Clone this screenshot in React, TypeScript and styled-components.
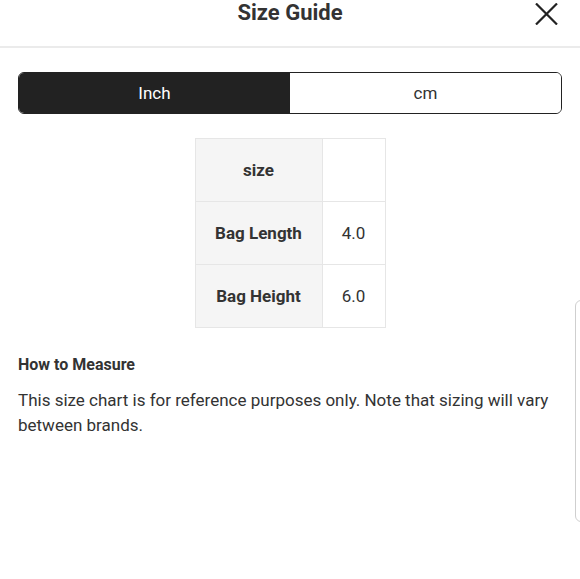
import React, { useState } from "react";
import styled, { createGlobalStyle } from "styled-components";

const Global = createGlobalStyle`
  html, body { margin: 0; padding: 0; background: #fff; }
  body { font-family: Roboto, "Liberation Sans", Arial, sans-serif; color: #333; }
  * { box-sizing: border-box; }
`;

const Page = styled.div`
  position: relative;
  width: 580px;
  height: 579px;
  overflow: hidden;
  background: #fff;
`;

const Header = styled.header`
  display: grid;
  grid-template-columns: 1fr auto 1fr;
  align-items: start;
  height: 48px;
  border-bottom: 2px solid #ebebeb;
`;

const Title = styled.h1`
  grid-column: 2;
  margin: 0;
  font-size: 22px;
  line-height: 26px;
  font-weight: 700;
  color: #333;
`;

const Close = styled.button`
  grid-column: 3;
  justify-self: end;
  margin: 3px 22px 0 0;
  padding: 0;
  width: 23px;
  height: 22px;
  border: none;
  background: none;
  display: flex;
  cursor: pointer;
`;

const Toggle = styled.div`
  display: flex;
  margin: 24px 18px 0;
  height: 42px;
  border: 1.5px solid #222;
  border-radius: 6px;
  overflow: hidden;
`;

const ToggleOption = styled.button<{ $active: boolean }>`
  flex: 1;
  border: none;
  margin: 0;
  padding: 0;
  font-family: inherit;
  font-size: 17px;
  color: ${(p) => (p.$active ? "#fff" : "#333")};
  background: ${(p) => (p.$active ? "#222" : "#fff")};
  cursor: pointer;
`;

const Table = styled.table`
  margin: 24px auto 0;
  border-collapse: collapse;
`;

const Cell = styled.td<{ $label?: boolean }>`
  border: 1px solid #e6e6e6;
  height: 63px;
  width: ${(p) => (p.$label ? "127px" : "63px")};
  padding: 0;
  text-align: center;
  font-size: 17px;
  color: #333;
  font-weight: ${(p) => (p.$label ? 700 : 400)};
  background: ${(p) => (p.$label ? "#f5f5f5" : "#fff")};
`;

const Section = styled.section`
  padding: 27px 18px 0;
`;

const SectionTitle = styled.h2`
  margin: 0;
  font-size: 16px;
  line-height: 20px;
  font-weight: 700;
  color: #333;
`;

const Text = styled.p`
  margin: 13px 0 0;
  font-size: 17px;
  line-height: 25px;
  color: #333;
`;

const EdgeCard = styled.div`
  position: absolute;
  left: 575px;
  top: 300px;
  width: 30px;
  height: 222px;
  border: 1px solid #cfcfcf;
  border-radius: 6px;
  background: #fff;
`;

const rows: [string, string][] = [
  ["size", ""],
  ["Bag Length", "4.0"],
  ["Bag Height", "6.0"],
];

export default function App() {
  const [unit, setUnit] = useState<"in" | "cm">("in");
  return (
    <Page>
      <Global />
      <Header>
        <Title>Size Guide</Title>
        <Close aria-label="close">
          <svg width="23" height="22" viewBox="0 0 23 22">
            <path d="M1 0.5 L22 21.5 M22 0.5 L1 21.5" stroke="#222" strokeWidth="2.2" fill="none" />
          </svg>
        </Close>
      </Header>
      <Toggle>
        <ToggleOption $active={unit === "in"} onClick={() => setUnit("in")}>Inch</ToggleOption>
        <ToggleOption $active={unit === "cm"} onClick={() => setUnit("cm")}>cm</ToggleOption>
      </Toggle>
      <Table>
        <tbody>
          {rows.map(([k, v]) => (
            <tr key={k}>
              <Cell $label>{k}</Cell>
              <Cell>{v}</Cell>
            </tr>
          ))}
        </tbody>
      </Table>
      <Section>
        <SectionTitle>How to Measure</SectionTitle>
        <Text>This size chart is for reference purposes only. Note that sizing will vary between brands.</Text>
      </Section>
      <EdgeCard />
    </Page>
  );
}
